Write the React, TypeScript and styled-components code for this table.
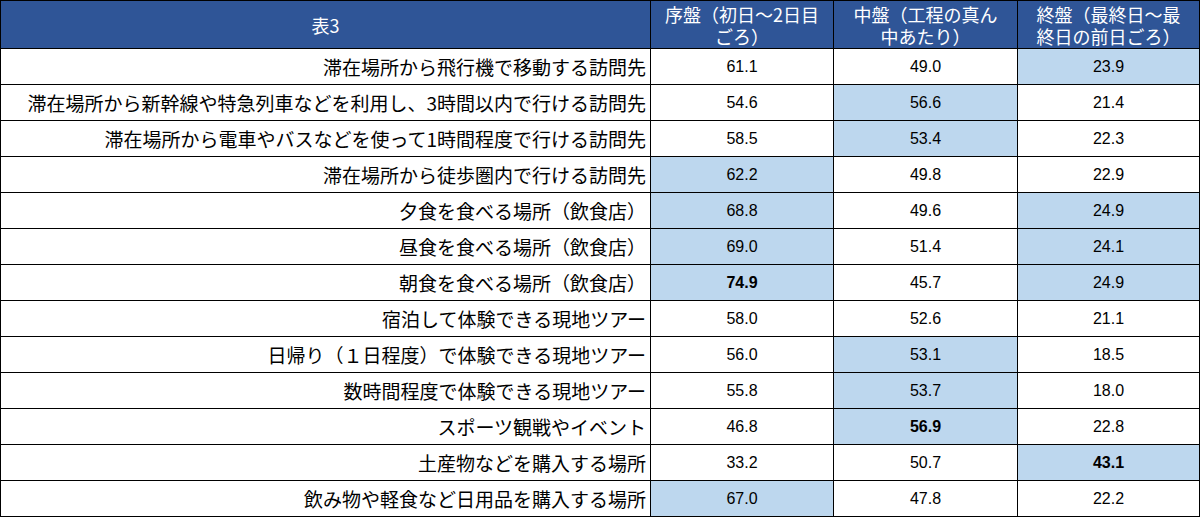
import React from "react";
import styled, { createGlobalStyle } from "styled-components";

interface IRow {
  label: string;
  values: number[];
  marked: number[];
  bold?: number;
}

const rows: IRow[] = [
  { label: "滞在場所から飛行機で移動する訪問先", values: [61.1, 49.0, 23.9], marked: [2] },
  { label: "滞在場所から新幹線や特急列車などを利用し、3時間以内で行ける訪問先", values: [54.6, 56.6, 21.4], marked: [1] },
  { label: "滞在場所から電車やバスなどを使って1時間程度で行ける訪問先", values: [58.5, 53.4, 22.3], marked: [1] },
  { label: "滞在場所から徒歩圏内で行ける訪問先", values: [62.2, 49.8, 22.9], marked: [0] },
  { label: "夕食を食べる場所（飲食店）", values: [68.8, 49.6, 24.9], marked: [0, 2] },
  { label: "昼食を食べる場所（飲食店）", values: [69.0, 51.4, 24.1], marked: [0, 2] },
  { label: "朝食を食べる場所（飲食店）", values: [74.9, 45.7, 24.9], marked: [0, 2], bold: 0 },
  { label: "宿泊して体験できる現地ツアー", values: [58.0, 52.6, 21.1], marked: [] },
  { label: "日帰り（１日程度）で体験できる現地ツアー", values: [56.0, 53.1, 18.5], marked: [1] },
  { label: "数時間程度で体験できる現地ツアー", values: [55.8, 53.7, 18.0], marked: [1] },
  { label: "スポーツ観戦やイベント", values: [46.8, 56.9, 22.8], marked: [1], bold: 1 },
  { label: "土産物などを購入する場所", values: [33.2, 50.7, 43.1], marked: [2], bold: 2 },
  { label: "飲み物や軽食など日用品を購入する場所", values: [67.0, 47.8, 22.2], marked: [0] },
];

const GlobalStyle = createGlobalStyle`
  body {
    margin: 0;
    background: #ffffff;
    font-family: "Noto Sans CJK JP", "Liberation Sans", sans-serif;
  }
`;

export default function App() {
  return (
    <>
      <GlobalStyle />
      <Table>
        <colgroup>
          <col style={{ width: 650 }} />
          <col style={{ width: 183 }} />
          <col style={{ width: 184 }} />
          <col style={{ width: 182 }} />
        </colgroup>
        <thead>
          <HeadRow>
            <HeadCell>表3</HeadCell>
            <HeadCell>
              <HeadLine>序盤（初日～2日目</HeadLine>
              <HeadLine>ごろ）</HeadLine>
            </HeadCell>
            <HeadCell>
              <HeadLine>中盤（工程の真ん</HeadLine>
              <HeadLine>中あたり）</HeadLine>
            </HeadCell>
            <HeadCell>
              <HeadLine>終盤（最終日～最</HeadLine>
              <HeadLine>終日の前日ごろ）</HeadLine>
            </HeadCell>
          </HeadRow>
        </thead>
        <tbody>
          {rows.map((row) => (
            <BodyRow key={row.label}>
              <LabelCell>{row.label}</LabelCell>
              {row.values.map((v, i) => (
                <ValueCell key={i} marked={row.marked.includes(i)} bold={row.bold === i}>
                  {v.toFixed(1)}
                </ValueCell>
              ))}
            </BodyRow>
          ))}
        </tbody>
      </Table>
    </>
  );
}

const Table = styled.table`
  width: 1200px;
  table-layout: fixed;
  border-collapse: collapse;
  border: 1px solid #000;
`;

const HeadRow = styled.tr`
  height: 48px;
  background: #2f5597;
`;

const HeadCell = styled.th`
  border: 1px solid #000;
  padding: 0 2px;
  color: #ffffff;
  font-weight: normal;
  font-size: 18px;
  text-align: center;
  vertical-align: middle;
  white-space: nowrap;
`;

const HeadLine = styled.div`
  height: 22px;
  line-height: 22px;
  overflow: visible;
`;

const BodyRow = styled.tr`
  height: 36px;
`;

const LabelCell = styled.td`
  border: 1px solid #000;
  padding: 0 4px 0 0;
  font-size: 19px;
  color: #000;
  text-align: right;
  vertical-align: middle;
  white-space: nowrap;
`;

const ValueCell = styled.td<{ marked: boolean; bold: boolean }>`
  border: 1px solid #000;
  padding: 0;
  background: ${({ marked }) => (marked ? "#bdd7ee" : "#ffffff")};
  font-family: "Liberation Sans", Arial, sans-serif;
  font-size: 16px;
  font-weight: ${({ bold }) => (bold ? "bold" : "normal")};
  color: #000;
  text-align: center;
  vertical-align: middle;
`;
